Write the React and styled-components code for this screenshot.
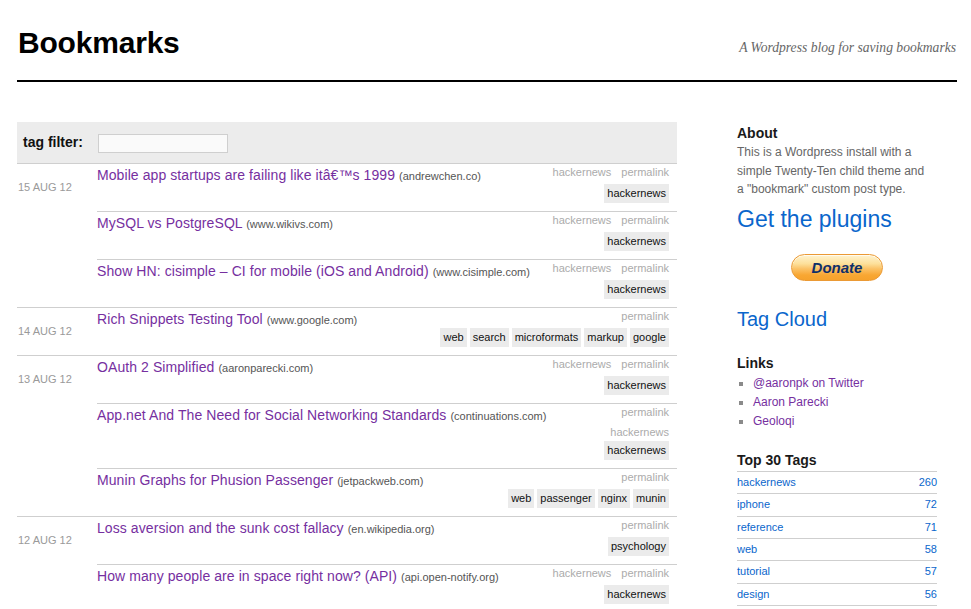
import React from "react";
import styled, { createGlobalStyle } from "styled-components";

const GlobalStyle = createGlobalStyle`
  html, body { margin: 0; padding: 0; background: #fff; }
  body { font-family: "Liberation Sans", Arial, Helvetica, sans-serif; color: #222; }
  * { box-sizing: border-box; }
`;

const Page = styled.div`
  width: 940px;
  margin-left: 17px;
`;

const Header = styled.header`
  display: flex;
  justify-content: space-between;
  align-items: flex-start;
  padding-top: 25px;
  border-bottom: 2px solid #000;
  padding-bottom: 19px;
`;

const SiteTitle = styled.h1`
  margin: 0 0 0 1px;
  font-size: 30px;
  line-height: 36px;
  font-weight: bold;
  color: #000;
  letter-spacing: -0.2px;
`;

const Tagline = styled.div`
  font-family: "Liberation Serif", "Times New Roman", serif;
  font-style: italic;
  font-size: 13.6px;
  line-height: 18px;
  color: #666;
  margin-top: 14px;
  margin-right: 1px;
`;

const Body = styled.div`
  display: flex;
  gap: 60px;
  margin-top: 40px;
`;

const Main = styled.main`
  width: 660px;
  flex: none;
`;

const FilterBar = styled.div`
  height: 41px;
  background: #ececec;
  display: flex;
  align-items: center;
  gap: 15px;
  padding: 0 6px 0 6px;
`;

const FilterLabel = styled.label`
  font-size: 14px;
  font-weight: bold;
  color: #111;
  margin-top: -2px;
`;

const FilterInput = styled.input`
  width: 130px;
  height: 19px;
  border: 1px solid #cfcfcf;
  background: #fafafa;
  padding: 0 3px;
  margin-top: 1px;
`;

const Group = styled.section`
  display: flex;
  border-top: 1px solid #cfcfcf;
`;

const DateCell = styled.div`
  width: 80px;
  flex: none;
  padding: 15px 0 0 1px;
  font-size: 11px;
  line-height: 16px;
  color: #9a9a9a;
  text-transform: uppercase;
`;

const Entries = styled.div`
  flex: 1;
  min-width: 0;
`;

const Entry = styled.article`
  display: flex;
  justify-content: space-between;
  align-items: flex-start;
  gap: 10px;
  padding: 0 8px 8px 0;
  & + & {
    border-top: 1px solid #cfcfcf;
  }
`;

const TitleLine = styled.div`
  padding-top: 2px;
  font-size: 14px;
  line-height: 18px;
  letter-spacing: 0.08px;
`;

const TitleLink = styled.a`
  color: #762f9f;
  text-decoration: none;
`;

const Domain = styled.span`
  font-size: 11px;
  color: #555;
  letter-spacing: 0;
`;

const Side = styled.div`
  display: flex;
  flex-direction: column;
  align-items: flex-end;
  flex: none;
`;

const MetaLine = styled.div`
  display: flex;
  gap: 10px;
  font-size: 11px;
  line-height: 16px;
  padding-bottom: 4px;
  & + & {
    padding-bottom: 1px;
  }
`;

const MetaLink = styled.a`
  color: #ababab;
  text-decoration: none;
`;

const Tags = styled.div`
  display: flex;
  gap: 3px;
`;

const Tag = styled.a`
  display: block;
  background: #ebebeb;
  color: #111;
  font-size: 11px;
  line-height: 13px;
  padding: 3px 3px;
  text-decoration: none;
`;

const Sidebar = styled.aside`
  width: 200px;
  flex: none;
  padding-top: 2px;
`;

const WidgetTitle = styled.h3`
  margin: ${(p) => p.$mt || 0}px 0 0;
  font-size: 14px;
  line-height: 18px;
  font-weight: bold;
  color: #1a1a1a;
`;

const AboutText = styled.p`
  margin: 1px 0 0;
  font-size: 12px;
  line-height: 18.7px;
  color: #666;
`;

const BigLink = styled.a`
  display: block;
  color: #0a66cc;
  text-decoration: none;
  font-size: ${(p) => p.$size}px;
  line-height: ${(p) => p.$lh}px;
  margin-top: ${(p) => p.$mt}px;
`;

const DonateWrap = styled.div`
  display: flex;
  justify-content: center;
  margin-top: 21px;
`;

const DonateButton = styled.button`
  width: 92px;
  height: 27px;
  border-radius: 14px;
  border: 1px solid #eb9a35;
  background: linear-gradient(
    to bottom,
    #fff3cf 0%,
    #fde09a 35%,
    #fbc266 55%,
    #f8a733 80%,
    #f6a22c 100%
  );
  box-shadow: inset 0 1px 0 rgba(255, 255, 255, 0.7);
  font-family: "Liberation Sans", Arial, sans-serif;
  font-style: italic;
  font-weight: bold;
  font-size: 15px;
  color: #10306a;
  padding: 0;
  cursor: pointer;
`;

const LinkList = styled.ul`
  list-style: none;
  margin: 2px 0 0;
  padding: 0;
`;

const LinkItem = styled.li`
  display: flex;
  align-items: center;
  font-size: 12px;
  line-height: 19px;
  &::before {
    content: "";
    width: 4px;
    height: 4px;
    background: #8a8a8a;
    margin: 1px 10px 0 2px;
  }
`;

const PurpleLink = styled.a`
  color: #762f9f;
  text-decoration: none;
`;

const TagTable = styled.div`
  margin-top: 2px;
  border-bottom: 1px solid #cfcfcf;
`;

const TagRow = styled.div`
  display: flex;
  justify-content: space-between;
  border-top: 1px solid #cfcfcf;
  height: 22.33px;
  font-size: 11px;
  line-height: 21.33px;
`;

const BlueLink = styled.a`
  color: #0a66cc;
  text-decoration: none;
`;

const groups = [
  {
    date: "15 Aug 12",
    entries: [
      {
        title: "Mobile app startups are failing like itâ€™s 1999",
        domain: "andrewchen.co",
        meta: [["hackernews", "permalink"]],
        tags: ["hackernews"],
      },
      {
        title: "MySQL vs PostgreSQL",
        domain: "www.wikivs.com",
        meta: [["hackernews", "permalink"]],
        tags: ["hackernews"],
      },
      {
        title: "Show HN: cisimple – CI for mobile (iOS and Android)",
        domain: "www.cisimple.com",
        meta: [["hackernews", "permalink"]],
        tags: ["hackernews"],
      },
    ],
  },
  {
    date: "14 Aug 12",
    entries: [
      {
        title: "Rich Snippets Testing Tool",
        domain: "www.google.com",
        meta: [["permalink"]],
        tags: ["web", "search", "microformats", "markup", "google"],
      },
    ],
  },
  {
    date: "13 Aug 12",
    entries: [
      {
        title: "OAuth 2 Simplified",
        domain: "aaronparecki.com",
        meta: [["hackernews", "permalink"]],
        tags: ["hackernews"],
      },
      {
        title: "App.net And The Need for Social Networking Standards",
        domain: "continuations.com",
        meta: [["permalink"], ["hackernews"]],
        tags: ["hackernews"],
      },
      {
        title: "Munin Graphs for Phusion Passenger",
        domain: "jetpackweb.com",
        meta: [["permalink"]],
        tags: ["web", "passenger", "nginx", "munin"],
      },
    ],
  },
  {
    date: "12 Aug 12",
    entries: [
      {
        title: "Loss aversion and the sunk cost fallacy",
        domain: "en.wikipedia.org",
        meta: [["permalink"]],
        tags: ["psychology"],
      },
      {
        title: "How many people are in space right now? (API)",
        domain: "api.open-notify.org",
        meta: [["hackernews", "permalink"]],
        tags: ["hackernews"],
      },
    ],
  },
];

const topTags = [
  ["hackernews", 260],
  ["iphone", 72],
  ["reference", 71],
  ["web", 58],
  ["tutorial", 57],
  ["design", 56],
];

export default function App() {
  return (
    <>
      <GlobalStyle />
      <Page>
        <Header>
          <SiteTitle>Bookmarks</SiteTitle>
          <Tagline>A Wordpress blog for saving bookmarks</Tagline>
        </Header>
        <Body>
          <Main>
            <FilterBar>
              <FilterLabel>tag filter:</FilterLabel>
              <FilterInput type="text" />
            </FilterBar>
            {groups.map((g) => (
              <Group key={g.date}>
                <DateCell>{g.date}</DateCell>
                <Entries>
                  {g.entries.map((e) => (
                    <Entry key={e.title}>
                      <TitleLine>
                        <TitleLink href="#">{e.title}</TitleLink>{" "}
                        <Domain>({e.domain})</Domain>
                      </TitleLine>
                      <Side>
                        {e.meta.map((line, i) => (
                          <MetaLine key={i}>
                            {line.map((m) => (
                              <MetaLink key={m} href="#">
                                {m}
                              </MetaLink>
                            ))}
                          </MetaLine>
                        ))}
                        <Tags>
                          {e.tags.map((t) => (
                            <Tag key={t} href="#">
                              {t}
                            </Tag>
                          ))}
                        </Tags>
                      </Side>
                    </Entry>
                  ))}
                </Entries>
              </Group>
            ))}
          </Main>
          <Sidebar>
            <WidgetTitle>About</WidgetTitle>
            <AboutText>
              This is a Wordpress install with a
              <br />
              simple Twenty-Ten child theme and
              <br />a "bookmark" custom post type.
            </AboutText>
            <BigLink href="#" $size={23} $lh={28} $mt={6}>
              Get the plugins
            </BigLink>
            <DonateWrap>
              <DonateButton type="button">Donate</DonateButton>
            </DonateWrap>
            <BigLink href="#" $size={20} $lh={24} $mt={26}>
              Tag Cloud
            </BigLink>
            <WidgetTitle $mt={23}>Links</WidgetTitle>
            <LinkList>
              <LinkItem>
                <PurpleLink href="#">@aaronpk on Twitter</PurpleLink>
              </LinkItem>
              <LinkItem>
                <PurpleLink href="#">Aaron Parecki</PurpleLink>
              </LinkItem>
              <LinkItem>
                <PurpleLink href="#">Geoloqi</PurpleLink>
              </LinkItem>
            </LinkList>
            <WidgetTitle $mt={20}>Top 30 Tags</WidgetTitle>
            <TagTable>
              {topTags.map(([name, count]) => (
                <TagRow key={name}>
                  <BlueLink href="#">{name}</BlueLink>
                  <BlueLink href="#">{count}</BlueLink>
                </TagRow>
              ))}
            </TagTable>
          </Sidebar>
        </Body>
      </Page>
    </>
  );
}
